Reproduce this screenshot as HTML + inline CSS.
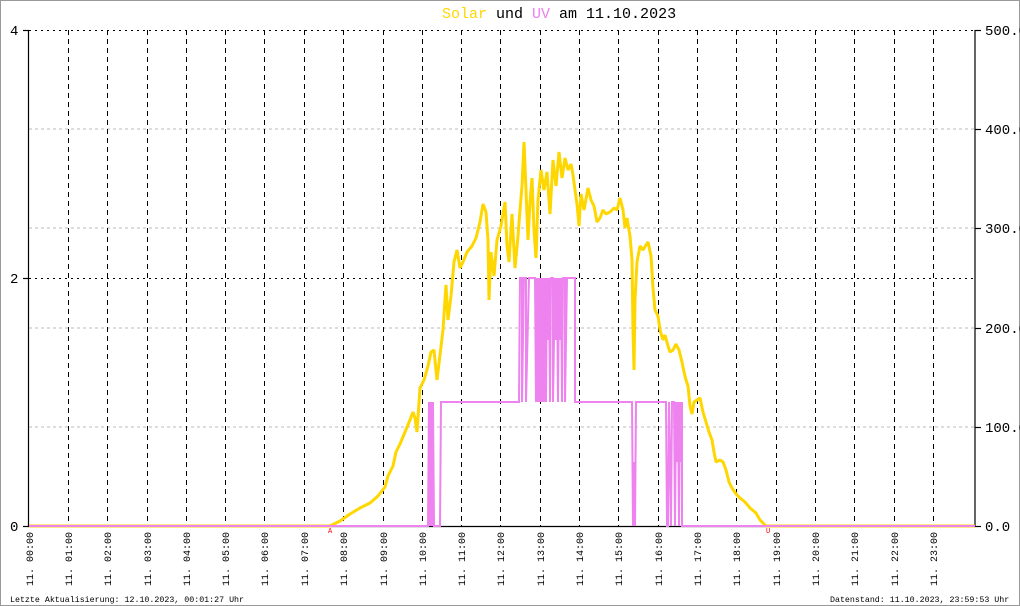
<!DOCTYPE html>
<html><head><meta charset="utf-8"><style>
html,body{margin:0;padding:0;background:#fff}
svg{display:block}
text{font-family:"Liberation Mono",monospace}
</style></head><body>
<svg width="1020" height="606" viewBox="0 0 1020 606" xmlns="http://www.w3.org/2000/svg">
<rect x="0.5" y="0.5" width="1019" height="605" fill="#fff" stroke="#999"/>
<text x="442" y="18" font-size="15"><tspan fill="#FFD700">Solar</tspan> und <tspan fill="#EE82EE">UV</tspan> am 11.10.2023</text>
<!-- gray horizontal grid -->
<g stroke="#bbb" stroke-dasharray="3,3">
<line x1="29" y1="129" x2="975" y2="129"/><line x1="29" y1="228" x2="975" y2="228"/>
<line x1="29" y1="328" x2="975" y2="328"/><line x1="29" y1="427" x2="975" y2="427"/>
</g>
<g stroke="#000" stroke-dasharray="2,4">
<line x1="29" y1="30.5" x2="975" y2="30.5"/><line x1="29" y1="278.5" x2="975" y2="278.5"/>
</g>
<g stroke="#000" stroke-dasharray="5,4">
<line x1="68.5" y1="30" x2="68.5" y2="526"/><line x1="107.5" y1="30" x2="107.5" y2="526"/><line x1="147.5" y1="30" x2="147.5" y2="526"/><line x1="186.5" y1="30" x2="186.5" y2="526"/><line x1="225.5" y1="30" x2="225.5" y2="526"/><line x1="264.5" y1="30" x2="264.5" y2="526"/><line x1="304.5" y1="30" x2="304.5" y2="526"/><line x1="343.5" y1="30" x2="343.5" y2="526"/><line x1="383.5" y1="30" x2="383.5" y2="526"/><line x1="422.5" y1="30" x2="422.5" y2="526"/><line x1="461.5" y1="30" x2="461.5" y2="526"/><line x1="500.5" y1="30" x2="500.5" y2="526"/><line x1="540.5" y1="30" x2="540.5" y2="526"/><line x1="579.5" y1="30" x2="579.5" y2="526"/><line x1="618.5" y1="30" x2="618.5" y2="526"/><line x1="658.5" y1="30" x2="658.5" y2="526"/><line x1="697.5" y1="30" x2="697.5" y2="526"/><line x1="736.5" y1="30" x2="736.5" y2="526"/><line x1="776.5" y1="30" x2="776.5" y2="526"/><line x1="815.5" y1="30" x2="815.5" y2="526"/><line x1="854.5" y1="30" x2="854.5" y2="526"/><line x1="894.5" y1="30" x2="894.5" y2="526"/><line x1="933.5" y1="30" x2="933.5" y2="526"/>
</g>
<!-- axes -->
<g stroke="#000" stroke-width="1.2">
<line x1="28.5" y1="30" x2="28.5" y2="527"/><line x1="975" y1="30" x2="975" y2="527"/>
<line x1="28" y1="526.5" x2="975" y2="526.5"/>
<line x1="23" y1="30.5" x2="29" y2="30.5"/><line x1="23" y1="278.5" x2="29" y2="278.5"/><line x1="23" y1="526.5" x2="29" y2="526.5"/>
<line x1="975" y1="30.5" x2="981" y2="30.5"/><line x1="975" y1="129.5" x2="981" y2="129.5"/><line x1="975" y1="228.5" x2="981" y2="228.5"/><line x1="975" y1="328.5" x2="981" y2="328.5"/><line x1="975" y1="427.5" x2="981" y2="427.5"/><line x1="975" y1="526.5" x2="981" y2="526.5"/>
</g>
<g font-size="14" fill="#000">
<text x="10" y="35">4</text><text x="10" y="283">2</text><text x="10" y="531">0</text>
<text x="985" y="35">500.0</text><text x="985" y="134">400.0</text><text x="985" y="233">300.0</text><text x="985" y="333">200.0</text><text x="985" y="432">100.0</text><text x="985" y="531">0.0</text>
</g>
<!-- solar -->
<polyline fill="none" stroke="#FFD700" stroke-width="3" stroke-linejoin="bevel" points="29,526 330,526 340,521 350,514 360,508 370,503 378,496 385,487 388,476 393,466 396,452 400,444 405,432 410,420 413,412 415,418 417,432 420,388 424,380 428,366 431,352 434,350 437,380 440,355 443,330 446,285 448,320 451,296 454,262 457,250 460,268 463,262 467,252 472,246 476,238 480,222 483,204 486,212 488,240 489,300 491,252 494,276 497,240 501,226 505,202 507,245 509,262 512,214 515,268 518,236 520,210 522,186 524,142 526,190 528,240 530,202 532,178 534,230 536,258 538,200 541,170 544,190 547,172 550,214 553,160 556,186 559,152 562,178 565,158 568,170 571,164 573,175 575,190 577,204 579,226 581,194 584,210 588,188 591,200 594,206 597,222 600,218 603,210 606,214 610,212 614,208 617,210 620,198 623,210 625,228 627,218 630,236 632,260 633,330 634,370 635,300 637,262 640,246 643,250 646,245 648,242 651,256 653,288 655,310 658,316 660,330 663,340 665,335 668,346 670,352 673,350 676,344 679,350 682,362 684,372 686,380 688,386 690,406 692,414 694,402 697,400 700,398 703,412 706,422 709,432 712,440 714,452 716,462 720,460 723,462 726,470 729,482 732,488 736,494 740,498 745,502 750,508 756,513 760,520 766,526 975,526"/>
<!-- UV -->
<polyline fill="none" stroke="#EE82EE" stroke-width="2" points="29,526 428,526 429,402 430,526 431,402 432,526 433,402 434,526 440,526 441,402 519,402 520,278 522,278 522,402 524,278 526,278 526,402 529,278 535,278 536,402 537,278 538,402 539,278 540,402 541,278 542,402 543,278 544,402 545,278 546,402 547,278 548,340 549,278 550,402 551,278 553,278 553,402 555,278 556,340 557,278 558,402 559,278 560,340 561,278 562,402 563,278 565,278 565,402 567,278 575,278 575,402 632,402 633,526 634,462 635,526 636,402 666,402 667,526 668,526 669,402 671,526 672,402 674,402 675,526 676,402 677,462 678,402 679,526 680,402 681,462 682,402 682,526 975,526"/>
<g font-size="7" fill="#f00"><text x="328" y="533">A</text><text x="766" y="533">U</text></g>
<!-- x labels -->
<g font-size="10" fill="#000">
<text transform="translate(33,586) rotate(-90)">11. 00:00</text>
<text transform="translate(72,586) rotate(-90)">11. 01:00</text>
<text transform="translate(111,586) rotate(-90)">11. 02:00</text>
<text transform="translate(151,586) rotate(-90)">11. 03:00</text>
<text transform="translate(190,586) rotate(-90)">11. 04:00</text>
<text transform="translate(229,586) rotate(-90)">11. 05:00</text>
<text transform="translate(268,586) rotate(-90)">11. 06:00</text>
<text transform="translate(308,586) rotate(-90)">11. 07:00</text>
<text transform="translate(347,586) rotate(-90)">11. 08:00</text>
<text transform="translate(387,586) rotate(-90)">11. 09:00</text>
<text transform="translate(426,586) rotate(-90)">11. 10:00</text>
<text transform="translate(465,586) rotate(-90)">11. 11:00</text>
<text transform="translate(504,586) rotate(-90)">11. 12:00</text>
<text transform="translate(544,586) rotate(-90)">11. 13:00</text>
<text transform="translate(583,586) rotate(-90)">11. 14:00</text>
<text transform="translate(622,586) rotate(-90)">11. 15:00</text>
<text transform="translate(662,586) rotate(-90)">11. 16:00</text>
<text transform="translate(701,586) rotate(-90)">11. 17:00</text>
<text transform="translate(740,586) rotate(-90)">11. 18:00</text>
<text transform="translate(780,586) rotate(-90)">11. 19:00</text>
<text transform="translate(819,586) rotate(-90)">11. 20:00</text>
<text transform="translate(858,586) rotate(-90)">11. 21:00</text>
<text transform="translate(898,586) rotate(-90)">11. 22:00</text>
<text transform="translate(937,586) rotate(-90)">11. 23:00</text>
</g>
<g font-size="8.3" fill="#000">
<text x="10" y="602">Letzte Aktualisierung: 12.10.2023, 00:01:27 Uhr</text>
<text x="830" y="602">Datenstand: 11.10.2023, 23:59:53 Uhr</text>
</g>
</svg>
</body></html>
